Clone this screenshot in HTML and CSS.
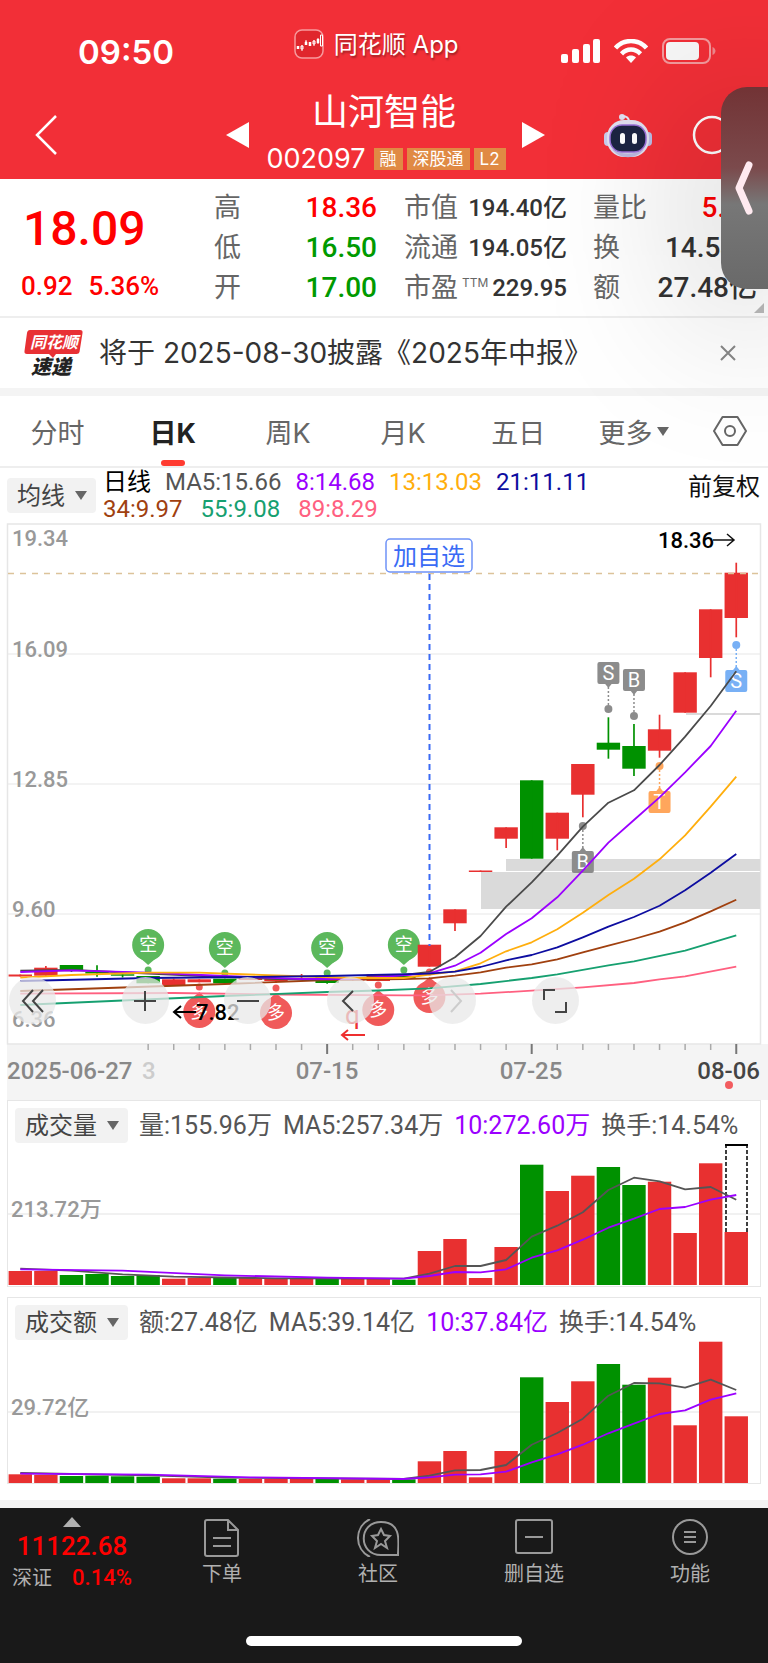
FILE: index.html
```html
<!DOCTYPE html>
<html lang="zh-CN">
<head>
    <meta charset="UTF-8">
    <meta name="viewport" content="width=device-width, initial-scale=1.0">
    <title>山河智能 002097</title>
    <link rel="stylesheet" href="styles.css">
</head>
<body>
    <div class="page">
        <header class="header">
            <div class="status-bar">
                <span class="time">09:50</span>
                <div class="app-name">
                    <svg width="30" height="30" viewBox="0 0 30 30" fill="none" stroke="#fff">
                        <rect x="1" y="1" width="28" height="28" rx="7" fill="#e0262d" stroke="#f79a9d" stroke-width="1.5"/>
                        <path d="M4 17v3M12 13v3M16 13v4M24 10v4" stroke-width="2.500"/>
                        <path d="M8 16v6M7 17h2v3H7zM12 11v2M11 13h2M20 11v6M19 12h2v3h-2zM24 9v6M26.500 6h2v11h-2z" stroke-width="1"/>
                    </svg>
                    <span>同花顺 App</span>
                </div>
                <div class="status-icons">
                    <svg width="39" height="24" viewBox="0 0 39 24" fill="#fff">
                        <rect x="0" y="15" width="7" height="9" rx="2"/>
                        <rect x="11" y="10" width="7" height="14" rx="2"/>
                        <rect x="22" y="5" width="7" height="19" rx="2"/>
                        <rect x="32" y="0" width="7" height="24" rx="2"/>
                    </svg>
                    <svg width="34" height="24" viewBox="0 0 34 24" fill="none" stroke="#fff" stroke-width="4.500">
                        <path d="M1.500 9C10-.3 24-.3 32.500 9"/>
                        <path d="M7.500 14.800C13 9.200 21 9.200 26.500 14.800"/>
                        <path d="M17 24l-5-5.500c3-2.600 7-2.600 10 0z" fill="#fff" stroke="none"/>
                    </svg>
                    <svg width="54" height="26" viewBox="0 0 54 26">
                        <rect x="1" y="1" width="47" height="24" rx="7" fill="none" stroke="#f39a9d" stroke-width="2"/>
                        <rect x="4" y="4" width="33" height="18" rx="4" fill="#f8f8f8"/>
                        <path d="M50.500 9c4 2 4 6 0 8z" fill="#f0888c"/>
                    </svg>
                </div>
            </div>
            <div class="title-bar">
                <button class="icon-btn back" aria-label="返回">
                    <svg width="24" height="40" viewBox="0 0 24 40" fill="none" stroke="#fff" stroke-width="2.500"><path d="M21 1L2 20l19 19"/></svg>
                </button>
                <button class="icon-btn" aria-label="上一只">
                    <svg width="23" height="26" viewBox="0 0 23 26" fill="#fff"><path d="M23 0v26L0 13z"/></svg>
                </button>
                <div class="stock">
                    <h1>山河智能</h1>
                    <div class="code">
                        <span>002097</span>
                        <span class="tag">融</span>
                        <span class="tag">深股通</span>
                        <span class="tag">L2</span>
                    </div>
                </div>
                <button class="icon-btn" aria-label="下一只">
                    <svg width="23" height="26" viewBox="0 0 23 26" fill="#fff"><path d="M0 0v26l23-13z"/></svg>
                </button>
                <div class="tools">
                    <button class="icon-btn" aria-label="智能助手">
                        <svg width="48" height="46" viewBox="0 0 48 46">
                            <circle cx="18" cy="5" r="3" fill="#dfe0f2"/>
                            <path d="M18 4c4 0 7 1 7 6" fill="none" stroke="#e4e4f4" stroke-width="2"/>
                            <rect x="0" y="20" width="9" height="14" rx="4" fill="#c9cdec"/>
                            <rect x="39" y="20" width="9" height="14" rx="4" fill="#b9bde6"/>
                            <rect x="3" y="8" width="42" height="37" rx="17" fill="#e2e0f0"/>
                            <path d="M8 37c8 6 24 6 32 0-7 11-25 11-32 0z" fill="#bcb9df"/>
                            <rect x="6" y="13" width="36" height="27" rx="12" fill="#1c2442" stroke="#9a6fd8" stroke-width="1.500"/>
                            <rect x="16" y="21" width="5" height="11" rx="2.500" fill="#fff"/>
                            <rect x="28" y="21" width="5" height="11" rx="2.500" fill="#fff"/>
                        </svg>
                    </button>
                    <button class="icon-btn" aria-label="搜索">
                        <svg width="40" height="40" viewBox="0 0 40 40" fill="none" stroke="#fff" stroke-width="2.500"><circle cx="20" cy="20" r="18"/></svg>
                    </button>
                </div>
            </div>
        </header>

        <section class="quote">
            <div class="price red">
                <strong>18.09</strong>
                <div class="change"><span>0.92</span><span>5.36%</span></div>
            </div>
            <dl class="col prices">
                <div><dt>高</dt><dd class="red">18.36</dd></div>
                <div><dt>低</dt><dd class="green">16.50</dd></div>
                <div><dt>开</dt><dd class="green">17.00</dd></div>
            </dl>
            <dl class="col values">
                <div><dt>市值</dt><dd>194.40亿</dd></div>
                <div><dt>流通</dt><dd>194.05亿</dd></div>
                <div><dt>市盈<sup>TTM</sup></dt><dd>229.95</dd></div>
            </dl>
            <dl class="col more-values">
                <div><dt>量比</dt><dd class="red">5.23</dd></div>
                <div><dt>换</dt><dd>14.54%</dd></div>
                <div><dt>额</dt><dd>27.48亿</dd></div>
            </dl>
            <span class="corner"></span>
        </section>

        <section class="news">
            <svg class="news-logo" width="60" height="48" viewBox="0 0 60 48">
                <path d="M6 1h50q3 0 2.500 3l-3 19q-.4 2-3 2H32l-3 4-4-4H3q-3 0-2.500-3L3 4q.5-3 3-3z" fill="#e83034"/>
                <text x="6" y="19" class="logo-top">同花顺</text>
                <text x="7" y="45" class="logo-bottom">速递</text>
            </svg>
            <a href="#">将于 2025-08-30披露《2025年中报》</a>
            <button class="icon-btn" aria-label="关闭">
                <svg width="16" height="16" viewBox="0 0 16 16" stroke="#888" stroke-width="2"><path d="M1 1l14 14M15 1L1 15"/></svg>
            </button>
        </section>

        <nav class="tabs">
            <button>分时</button>
            <button class="active">日K</button>
            <button>周K</button>
            <button>月K</button>
            <button>五日</button>
            <button>更多<i class="caret"></i></button>
            <button aria-label="设置">
                <svg width="34" height="30" viewBox="0 0 34 30" fill="none" stroke="#666" stroke-width="2"><path d="M9.500 1h15L33 15l-8.500 14h-15L1 15z" stroke-linejoin="round"/><circle cx="17" cy="15" r="5"/></svg>
            </button>
        </nav>

        <section class="legend">
            <div class="select-box">
                <select aria-label="主图指标"><option>均线</option></select>
                <i class="caret"></i>
            </div>
            <div class="ma-list">
                <div class="ma-row">
                    <span class="black">日线</span>
                    <span>MA5:15.66</span>
                    <span class="ma8">8:14.68</span>
                    <span class="ma13">13:13.03</span>
                    <span class="ma21">21:11.11</span>
                </div>
                <div class="ma-row">
                    <span class="ma34">34:9.97</span>
                    <span class="ma55">55:9.08</span>
                    <span class="ma89">89:8.29</span>
                </div>
            </div>
            <button class="adjust">前复权</button>
        </section>

        <section class="kline">
            <svg id="kline" viewBox="0 523 768 577">
                <rect x="7" y="1044" width="761" height="56" fill="#f4f4f4"/>
                <g fill="none" stroke="#e6e6e6" stroke-width="1.500">
                    <path d="M8 654h753M8 784h753M8 914h753" stroke="#f0f0f0"/>
                    <rect x="7.500" y="524" width="753" height="520"/>
                </g>
                <g fill="#dadada">
                    <rect x="506" y="859" width="254" height="12"/>
                    <rect x="481" y="872" width="279" height="37"/>
                    <rect x="686" y="713" width="74" height="2"/>
                </g>
                <g class="axis">
                    <text x="12" y="546">19.34</text>
                    <text x="12" y="657">16.09</text>
                    <text x="12" y="787">12.85</text>
                    <text x="12" y="917">9.60</text>
                    <text x="12" y="1027">6.36</text>
                </g>
                <g id="marks"></g>
                <g id="candles"></g>
                <path d="M8 573.500h753" stroke="#dcc39a" stroke-width="1.500" stroke-dasharray="6 6"/>
                <path d="M429.500 574v372" stroke="#3a6bf5" stroke-width="2" stroke-dasharray="6 4"/>
                <rect x="386" y="539" width="86" height="33" rx="4" fill="#fff" stroke="#6f93f7" stroke-width="1.500"/>
                <text x="429" y="565" class="add-label">加自选</text>
                <g id="lines"></g>
                <text x="658" y="548" class="peak">18.36</text>
                <path d="M713 540h21M727 534l7 6-7 6" fill="none" stroke="#111" stroke-width="1.500"/>
                <path d="M196 1012h-22M181 1006l-7 6 7 6" fill="none" stroke="#000" stroke-width="2"/>
                <text x="196" y="1020" class="peak">7.82</text>
                <text x="345" y="1024" class="signal">q</text>
                <path d="M365 1035h-23M348 1030l-6 5 6 5" fill="none" stroke="#ee2f2f" stroke-width="2"/>
                <g id="ticks" stroke="#aaa" stroke-width="1.500"></g>
                <g class="dates">
                    <text x="7" y="1079">2025-06-27</text>
                    <text x="142" y="1079" fill="#ccc" class="faint-date">3</text>
                    <text x="327" y="1079" text-anchor="middle">07-15</text>
                    <text x="531" y="1079" text-anchor="middle">07-25</text>
                    <text x="760" y="1079" text-anchor="end" class="last-date">08-06</text>
                </g>
                <circle cx="729" cy="1085" r="4" fill="#f25c5f"/>
            </svg>
            <div class="chart-tools">
                <button aria-label="最早">
                    <svg width="24" height="24" viewBox="0 0 24 24"><path d="M12 1L2 12l10 11M22 1L12 12l10 11"/></svg>
                </button>
                <button aria-label="放大">
                    <svg width="24" height="24" viewBox="0 0 24 24"><path d="M1 12h22M12 2v20"/></svg>
                </button>
                <button aria-label="缩小">
                    <svg width="24" height="24" viewBox="0 0 24 24"><path d="M1 12h22"/></svg>
                </button>
                <button aria-label="左移">
                    <svg width="24" height="24" viewBox="0 0 24 24"><path d="M15 2L5 12l10 10"/></svg>
                </button>
                <button aria-label="右移" class="faint">
                    <svg width="24" height="24" viewBox="0 0 24 24"><path d="M10 1l10 11-10 11"/></svg>
                </button>
                <button aria-label="全屏">
                    <svg width="24" height="24" viewBox="0 0 24 24"><path d="M1 11V1h11M23 13v10H12"/></svg>
                </button>
            </div>
        </section>

        <section class="panel">
            <div class="panel-head">
                <div class="select-box">
                    <select aria-label="副图指标一"><option>成交量</option></select>
                    <i class="caret"></i>
                </div>
                <span>量:155.96万</span>
                <span>MA5:257.34万</span>
                <span class="ma8">10:272.60万</span>
                <span>换手:14.54%</span>
            </div>
            <svg id="volume" viewBox="8 1144 752 142">
                <path d="M8 1214h752" stroke="#ececec" stroke-width="1.500"/>
                <text x="11" y="1217" class="axis-label">213.72万</text>
            </svg>
        </section>

        <section class="panel">
            <div class="panel-head">
                <div class="select-box">
                    <select aria-label="副图指标二"><option>成交额</option></select>
                    <i class="caret"></i>
                </div>
                <span>额:27.48亿</span>
                <span>MA5:39.14亿</span>
                <span class="ma8">10:37.84亿</span>
                <span>换手:14.54%</span>
            </div>
            <svg id="amount" viewBox="8 1341 752 142">
                <path d="M8 1412h752" stroke="#ececec" stroke-width="1.500"/>
                <text x="11" y="1415" class="axis-label">29.72亿</text>
            </svg>
        </section>

        <footer class="bottom">
            <nav class="bottom-nav">
                <a href="#" class="index">
                    <i class="up"></i>
                    <strong>11122.68</strong>
                    <span><em>深证</em><b>0.14%</b></span>
                </a>
                <a href="#">
                    <svg width="36" height="38" viewBox="0 0 36 38"><path d="M3 1h21l10 10v24q0 2-2 2H3q-2 0-2-2V3q0-2 2-2zM24 1v10h10M9 19h18M9 27h18"/></svg>
                    下单
                </a>
                <a href="#">
                    <svg width="42" height="38" viewBox="0 0 42 38"><path d="M24 3c22 0 17 22 17 33H24C1 36 1 3 24 3zM13 0C-3 8-3 30 13 38"/><path d="M24 10l3 6 6 1-5 5 2 7-6-4-6 4 2-7-5-5 6-1z"/></svg>
                    社区
                </a>
                <a href="#">
                    <svg width="38" height="36" viewBox="0 0 38 36"><rect x="1" y="1" width="36" height="33" rx="2"/><path d="M10 18h18"/></svg>
                    删自选
                </a>
                <a href="#">
                    <svg width="36" height="36" viewBox="0 0 36 36"><circle cx="18" cy="18" r="17"/><path d="M12 13h12M12 18h12M12 23h12"/></svg>
                    功能
                </a>
            </nav>
            <div class="home-bar"></div>
        </footer>

        <button class="side-handle" aria-label="展开">
            <svg width="20" height="54" viewBox="0 0 20 54" fill="none" stroke="#ffeaf0" stroke-width="7" stroke-linecap="round" stroke-linejoin="round"><path d="M14 4L4 27l10 23"/></svg>
        </button>
    </div>

    <script>
        const RED = '#e83030';
        const GREEN = '#009100';
        const STEP = 25.57;
        const BAR_WIDTH = 23.4;
        const cx = i => 20.3 + i * STEP;

        // [颜色, 最高, 实体上沿, 实体下沿, 最低]
        const candles = [
            ['r', 974.5, 974.5, 976.5, 976.5], ['r', 966, 967.7, 975.7, 975.7], ['g', 965, 965, 970.3, 972],
            ['g', 965.3, 972, 973.5, 976.7], ['g', 974.3, 974.3, 975.7, 977.5], ['g', 976, 976, 983.3, 983.3],
            ['r', 978.7, 979.3, 985.3, 985.3], ['r', 979.3, 979.3, 982.3, 982.3], ['g', 978.7, 978.7, 983.3, 983.7],
            ['r', 977, 978, 980, 980], ['r', 978, 979, 981, 983], ['r', 974, 978, 980, 980],
            ['g', 977.3, 977.3, 983, 983.7], ['r', 977, 978, 980.5, 981], ['r', 974.3, 974.3, 981, 981],
            ['g', 976, 976, 979, 979], ['r', 944.7, 944.7, 966.7, 966.7], ['r', 909.3, 909.3, 923.3, 931],
            ['r', 870.5, 870.5, 872, 872], ['r', 827.3, 827.3, 838.7, 848], ['g', 780.3, 780.3, 858.7, 858.7],
            ['r', 812.7, 812.7, 838.7, 850.3], ['r', 764, 764, 794.7, 817.3], ['g', 717.3, 742.7, 749.7, 758.7],
            ['g', 724, 746, 768.7, 776], ['r', 714.7, 729.3, 750.7, 757.7], ['r', 672.3, 672.3, 712.7, 712.7],
            ['r', 609.3, 609.3, 658, 677.3], ['r', 562.7, 572.7, 618, 637.3]
        ];

        // 均线: [序号, y]
        const maLines = {
            '#ff6080': [[0, 993.7], [6, 993], [10, 994.5], [15, 995.3], [16, 995.3], [18, 993.7], [20, 990.7], [22, 987.3], [24, 983], [25, 979.3], [26, 976.3], [28, 966.7]],
            '#16a070': [[0, 1005], [8, 996], [12, 992], [14, 990.5], [16, 988.3], [18, 984], [20, 978], [21, 974.3], [23, 965.3], [24, 961.3], [26, 950.7], [28, 935.3]],
            '#a0400f': [[0, 991], [4, 987.5], [8, 984], [12, 980], [15, 979], [16, 978.3], [17, 975.7], [18, 972.3], [19, 967.7], [20, 964.3], [21, 959.3], [22, 952.3], [23, 945.7], [24, 939], [25, 931.7], [26, 922.3], [27, 911.3], [28, 899.7]],
            '#4a4a4a': [[0, 970.7], [2, 970], [5, 973.5], [8, 977], [10, 979], [12, 979.5], [14, 977], [15, 975], [16, 972], [17, 957.3], [18, 936], [19, 906.7], [20, 882.3], [21, 855.7], [22, 826.7], [23, 802.7], [24, 790.3], [25, 765], [26, 736.7], [27, 706], [28, 671.3]],
            '#9b00ff': [[0, 972], [2, 970.3], [5, 972.7], [8, 976], [11, 979], [13, 979], [16, 973.3], [17, 965.7], [18, 952.7], [19, 934], [20, 918.3], [21, 897.3], [22, 870.7], [23, 842.7], [24, 820], [25, 797.3], [26, 772.3], [27, 746], [28, 710.7]],
            '#ffae0d': [[0, 977.7], [2, 975], [5, 972.7], [7, 972.7], [10, 975.5], [13, 978], [15, 978], [16, 974.5], [17, 971.3], [18, 963.3], [19, 951.3], [20, 942.3], [21, 929.3], [22, 912.7], [23, 895], [24, 878.7], [25, 859.3], [26, 835.3], [27, 806.7], [28, 776.7]],
            '#0d0da0': [[0, 981], [5, 978], [9, 977], [12, 976], [16, 973.7], [17, 971.7], [18, 967], [19, 960.3], [20, 955], [21, 947.3], [22, 937.3], [23, 926.7], [24, 917], [25, 905.7], [26, 890.3], [27, 872.7], [28, 854]]
        };

        function line(points, color) {
            const pts = points.map(p => `${cx(p[0])},${p[1]}`).join(' ');
            return `<polyline points="${pts}" fill="none" stroke="${color}" stroke-width="1.8" stroke-linejoin="round"/>`;
        }

        function drawCandles() {
            document.getElementById('candles').innerHTML = candles.map((c, i) => {
                const color = c[0] === 'r' ? RED : GREEN;
                const x = cx(i);
                return `<rect x="${x - BAR_WIDTH / 2}" y="${c[2]}" width="${BAR_WIDTH}" height="${c[3] - c[2]}" fill="${color}"/>` +
                    `<path d="M${x} ${c[1]}V${c[4]}" stroke="${color}" stroke-width="1.7"/>`;
            }).join('');
            document.getElementById('lines').innerHTML = Object.keys(maLines).map(k => line(maLines[k], k)).join('');

            let ticks = '';
            for (let i = 5; i < 29; i++) {
                const big = (i - 12) % 8 === 0 && i >= 12;
                ticks += `<path d="M${cx(i)} 1044v${big ? 10 : 6}"${big ? ' stroke="#777" stroke-width="2"' : ''}/>`;
            }
            document.getElementById('ticks').innerHTML = ticks;
        }

        // 空/多 气泡与买卖点
        function drawMarks() {
            let html = '';
            [[5, 945], [8, 948], [12, 948], [15, 945]].forEach(([i, y]) => {
                const x = cx(i);
                html += `<g fill="#5cb85c"><circle cx="${x}" cy="${y}" r="16"/><path d="M${x - 8} ${y + 13}h16l-8 7z"/><circle cx="${x}" cy="${y + 25}" r="3.500"/></g>` +
                    `<text x="${x}" y="${y + 6}" class="bubble">空</text>`;
            });
            [[7, 1012], [10, 1013], [14, 1010], [16, 997]].forEach(([i, y]) => {
                const x = cx(i);
                html += `<g fill="#f05a5a"><circle cx="${x}" cy="${y}" r="16"/><path d="M${x - 8} ${y - 13}h16l-8-7z"/><circle cx="${x}" cy="${y - 25}" r="3.500"/></g>` +
                    `<text x="${x}" y="${y + 6}" class="bubble">多</text>`;
            });
            // [序号, 文字, 方块中心, 圆点, 颜色]
            [[23, 'S', 673, 709, '#8c8c8c'], [24, 'B', 680, 716, '#8c8c8c'], [22, 'B', 862, 826, '#8c8c8c'],
             [25, 'T', 802, 766, '#ffa65c'], [28, 'S', 681, 645, '#78b0f5']].forEach(([i, t, y, dot, color]) => {
                const x = cx(i);
                const s = dot > y ? 1 : -1;
                html += `<g fill="${color}"><rect x="${x - 11}" y="${y - 11}" width="22" height="22" rx="2"/>` +
                    `<path d="M${x - 4} ${y + s * 10}h8l-4 ${s * 5}z"/><circle cx="${x}" cy="${dot}" r="4"/>` +
                    `<path d="M${x} ${y + s * 14}V${dot}" stroke="${color}" stroke-width="1.5" stroke-dasharray="2 2"/></g>` +
                    `<text x="${x}" y="${y + 7}" class="trade">${t}</text>`;
            });
            document.getElementById('marks').innerHTML = html;
        }

        const barColors = 'rrggggrrgrrrgrrgrrrrgrrggrrrr';

        function drawBars(id, base, tops, ma5, ma10, extra) {
            let html = tops.map((y, i) =>
                `<rect x="${cx(i) - BAR_WIDTH / 2}" y="${y}" width="${BAR_WIDTH}" height="${base - y}" fill="${barColors[i] === 'r' ? RED : GREEN}"/>`
            ).join('');
            html += (extra || '') + line(ma5, '#555') + line(ma10, '#9b00ff');
            document.getElementById(id).innerHTML += html;
        }

        drawCandles();
        drawMarks();
        drawBars('volume', 1285,
            [1271, 1271, 1275, 1274, 1276, 1275, 1278.7, 1278, 1278, 1278, 1279, 1279, 1279, 1279, 1279, 1279.7, 1251, 1239, 1278, 1247, 1164.7, 1191, 1175.7, 1167, 1185, 1181.7, 1233, 1163.3, 1232],
            [[0, 1268.7], [2, 1270.7], [4, 1274.3], [6, 1276.7], [10, 1278.3], [15, 1278.7], [16, 1273.7], [17, 1266], [18, 1266], [19, 1260], [20, 1236.7], [21, 1225.7], [22, 1212.3], [23, 1190], [24, 1177.7], [25, 1181.3], [26, 1189.3], [27, 1187], [28, 1199.7]],
            [[0, 1269.3], [4, 1270.7], [8, 1275.3], [12, 1277.7], [15, 1278.7], [16, 1276], [17, 1272], [18, 1272.3], [19, 1269.3], [20, 1257.7], [21, 1250.3], [22, 1239.7], [23, 1227.7], [24, 1218.7], [25, 1209], [26, 1207], [27, 1199.7], [28, 1195]],
            '<path d="M726 1232v-86M747 1232v-86" stroke="#000" stroke-width="1.500" stroke-dasharray="4 2"/><path d="M725 1145h23" stroke="#000" stroke-width="2"/>');
        drawBars('amount', 1483,
            [1474.3, 1475, 1476, 1475.7, 1476.3, 1476.7, 1478.3, 1478.3, 1478.7, 1479, 1479, 1479, 1479, 1479.3, 1479.3, 1479.3, 1461.3, 1451, 1477.3, 1451, 1377.3, 1402, 1381.3, 1364, 1384.7, 1377.7, 1425.3, 1341.7, 1416.3],
            [[0, 1473], [5, 1475.3], [8, 1477.7], [15, 1479], [16, 1475.7], [17, 1470.3], [18, 1470], [19, 1465], [20, 1444.7], [21, 1433], [22, 1418.7], [23, 1395.7], [24, 1383], [25, 1383.3], [26, 1387.7], [27, 1379.7], [28, 1390]],
            [[0, 1473.7], [5, 1474.7], [9, 1477.3], [15, 1479], [16, 1477.3], [17, 1474.7], [18, 1474.3], [19, 1471.7], [20, 1462.3], [21, 1454.3], [22, 1444.7], [23, 1433.3], [24, 1423.7], [25, 1414], [26, 1410.3], [27, 1399.7], [28, 1393.3]]);
    </script>
</body>
</html>
```
FILE: styles.css
```css
* {
    box-sizing: border-box;
}
body {
    margin: 0;
    font-family: Roboto, "Noto Sans CJK SC", sans-serif;
    color: #333;
    background-color: #fff;
}
button, select {
    font: inherit;
    color: inherit;
    border: none;
    background: none;
    padding: 0;
}
a {
    color: inherit;
    text-decoration: none;
}
svg {
    display: block;
}
.page {
    position: relative;
    overflow: hidden;
}
.red {
    color: #ff0000;
}
.green {
    color: #009a00;
}
.black {
    color: #000;
}
.header {
    background-color: #f22f37;
    color: #fff;
    height: 179px;
}
.status-bar {
    display: grid;
    grid-template-columns: 38% 1fr 28%;
    height: 90px;
    font-family: Inter, "Noto Sans CJK SC", sans-serif;
}
.time {
    font-size: 33px;
    font-weight: 600;
    line-height: 40px;
    padding: 32px 0 0 78px;
}
.app-name {
    display: flex;
    align-items: center;
    gap: 10px;
    height: 88px;
    padding-left: 2px;
    font-size: 24px;
    text-shadow: 1px 2px 2px rgba(0, 0, 0, 0.35);
}
.app-name span {
    padding-bottom: 3px;
}
.status-icons {
    display: flex;
    align-items: center;
    gap: 14px;
    padding: 12px 0 0 8px;
}
.title-bar {
    display: grid;
    grid-template-columns: 226px 24px 1fr 24px 222px;
    align-items: center;
    height: 89px;
}
.back {
    padding-left: 35px;
}
.icon-btn {
    display: block;
}
.stock {
    align-self: start;
    text-align: center;
}
.stock h1 {
    margin: 0 0 8px;
    padding-right: 4px;
    font-size: 36px;
    font-weight: 400;
    line-height: 46px;
}
.code {
    display: flex;
    justify-content: center;
    align-items: center;
    gap: 4px;
    line-height: 30px;
    font-size: 27px;
    font-family: Inter, "Noto Sans CJK SC", sans-serif;
}
.code span:first-child {
    margin-right: 4px;
}
.tag {
    padding: 0 6px;
    font-size: 17px;
    line-height: 22px;
    background-color: #e08a44;
}
.tools {
    display: flex;
    align-items: center;
    gap: 40px;
    padding-left: 58px;
}
.quote {
    position: relative;
    display: grid;
    grid-template-columns: 214px 163px 27px 163px 26px 164px;
    align-items: center;
    height: 139px;
    border-bottom: 2px solid #eee;
    white-space: nowrap;
}
.price {
    padding: 6px 0 0 21px;
}
.price strong {
    display: block;
    padding-left: 2px;
    font-size: 48px;
    font-weight: 500;
    line-height: 70px;
}
.change {
    display: flex;
    gap: 16px;
    font-size: 26px;
    font-weight: 500;
    line-height: 44px;
}
.col {
    margin: 0;
    grid-column: 2;
}
.col.values {
    grid-column: 4;
}
.col.more-values {
    grid-column: 6;
}
.price, .col {
    grid-row: 1;
}
.col div {
    display: flex;
    justify-content: space-between;
    align-items: center;
    height: 40px;
    line-height: 40px;
}
.col dt {
    font-size: 27px;
    color: #666;
}
.col dd {
    margin: 0;
    font-size: 28px;
    font-weight: 500;
}
.values dd {
    font-size: 24px;
}
.col sup {
    font-family: Inter, sans-serif;
    font-size: 12px;
    line-height: 12px;
    margin-left: 4px;
}
.corner {
    position: absolute;
    right: 4px;
    bottom: 3px;
    border-left: 10px solid transparent;
    border-bottom: 10px solid #bbb;
}
.news {
    display: flex;
    align-items: center;
    height: 78px;
    padding: 0 32px 0 24px;
    border-bottom: 8px solid #f4f4f4;
}
.news-logo {
    overflow: visible;
}
.news a {
    flex: 1;
    margin-left: 15px;
    padding-bottom: 4px;
    font-family: Inter, "Noto Sans CJK SC", sans-serif;
    font-size: 28px;
}
.logo-top {
    font: italic 700 16px "Noto Sans CJK SC", sans-serif;
    fill: #fff;
}
.logo-bottom {
    font: italic 900 20px "Noto Sans CJK SC", sans-serif;
    fill: #222;
}
.tabs {
    display: grid;
    grid-template-columns: repeat(6, 15%) 1fr;
    height: 72px;
    border-bottom: 2px solid #eee;
    font-family: Inter, "Noto Sans CJK SC", sans-serif;
    font-size: 27px;
    color: #666;
}
.tabs button {
    display: flex;
    justify-content: center;
    align-items: center;
}
.tabs .active {
    position: relative;
    color: #222;
    font-weight: 700;
}
.tabs .active::after {
    content: "";
    position: absolute;
    bottom: 0;
    width: 24px;
    height: 6px;
    border-radius: 3px;
    background-color: #ff3b30;
}
.caret {
    border: 6px solid transparent;
    border-top: 9px solid #666;
    border-bottom: none;
}
.tabs .caret {
    margin-left: 4px;
}
.legend {
    display: flex;
    align-items: flex-start;
    height: 55px;
    padding: 0 8px 0 7px;
    font-size: 24px;
    color: #555;
}
.select-box {
    position: relative;
    display: flex;
    align-items: center;
    flex: none;
    height: 35px;
    border-radius: 4px;
    background-color: #f2f2f2;
    color: #444;
    font-size: 24px;
}
.select-box select {
    appearance: none;
    height: 35px;
    padding: 0 31px 0 10px;
    line-height: 34px;
}
.select-box .caret {
    position: absolute;
    right: 9px;
    pointer-events: none;
}
.legend .select-box {
    margin-top: 10px;
}
.ma-list {
    flex: 1;
    margin-left: 7px;
    padding-top: 1px;
    line-height: 27px;
    white-space: nowrap;
}
.ma-row {
    display: flex;
    gap: 14px;
}
.ma-row + .ma-row {
    gap: 18px;
}
.ma8 {
    color: #9b00ff;
}
.ma13 {
    color: #ffae0d;
}
.ma21 {
    color: #0d0da0;
}
.ma34 {
    color: #a0400f;
}
.ma55 {
    color: #16a070;
}
.ma89 {
    color: #ff6080;
}
.adjust {
    color: #111;
    line-height: 38px;
}
.kline {
    position: relative;
}
.kline > svg, .panel > svg {
    width: 100%;
}
.axis, .axis-label {
    font-size: 22px;
    font-weight: 500;
    fill: #999;
}
.dates {
    font-size: 24px;
    font-weight: 500;
    fill: #888;
}
.faint-date {
    fill: #ccc;
}
.last-date {
    fill: #444;
}
.add-label {
    font-size: 24px;
    text-anchor: middle;
    fill: #3a6bf5;
}
.peak {
    font-size: 22px;
    font-weight: 500;
    fill: #000;
}
.signal {
    font-size: 26px;
    fill: #ee2f2f;
}
.bubble {
    font-size: 18px;
    text-anchor: middle;
    fill: #fff;
}
.trade {
    font-size: 20px;
    text-anchor: middle;
    fill: #fff;
}
.chart-tools {
    position: absolute;
    left: 9px;
    right: 189px;
    top: 454px;
    display: flex;
    justify-content: space-between;
}
.chart-tools button {
    display: flex;
    align-items: center;
    justify-content: center;
    width: 47px;
    height: 47px;
    border-radius: 50%;
    background-color: rgba(232, 232, 232, 0.75);
}
.chart-tools button:first-child {
    margin-right: 10px;
}
.chart-tools svg {
    fill: none;
    stroke: #444;
    stroke-width: 2;
}
.chart-tools .faint svg {
    stroke: #ccc;
}
.panel {
    margin: 0 7px 10px;
    border: 1px solid #e6e6e6;
}
.panel-head {
    display: flex;
    align-items: flex-start;
    gap: 11px;
    height: 43px;
    padding: 7px 7px 0;
    font-size: 25px;
    line-height: 35px;
    color: #555;
    white-space: nowrap;
}
.panel-head .ma8 {
    color: #9b00ff;
}
.bottom {
    margin-top: 16px;
    border-top: 8px solid #f3f3f3;
    background-color: #191919;
    color: #b0b0b0;
    height: 163px;
}
.bottom-nav {
    display: grid;
    grid-template-columns: 144px repeat(4, 1fr);
    height: 128px;
}
.bottom-nav a {
    display: flex;
    flex-direction: column;
    align-items: center;
    justify-content: space-between;
    height: 80px;
    padding-top: 11px;
    font-size: 20px;
    line-height: 28px;
}
.bottom-nav svg {
    fill: none;
    stroke: #999;
    stroke-width: 2;
}
.bottom-nav .index {
    height: 84px;
    padding-top: 9px;
    color: #ff0000;
}
.index strong {
    font-size: 26px;
    font-weight: 500;
}
.index span {
    display: flex;
    gap: 20px;
    font-size: 22px;
}
.index b {
    font-weight: 500;
}
.index em {
    font-style: normal;
    font-size: 20px;
    color: #b0b0b0;
}
.up {
    border: 9px solid transparent;
    border-bottom: 10px solid #b0b0b0;
    border-top: none;
}
.home-bar {
    width: 36%;
    height: 10px;
    margin: 0 auto;
    border-radius: 5px;
    background-color: #fff;
}
.side-handle {
    position: absolute;
    right: 0;
    top: 87px;
    width: 47px;
    height: 202px;
    padding: 0 0 0 14px;
    border-radius: 26px 0 0 26px;
    background: linear-gradient(#723335, #7b4a4c 40%, #777 58%, #696969);
    box-shadow: 0 20px 160px 20px rgba(0, 0, 0, 0.22);
}
```
